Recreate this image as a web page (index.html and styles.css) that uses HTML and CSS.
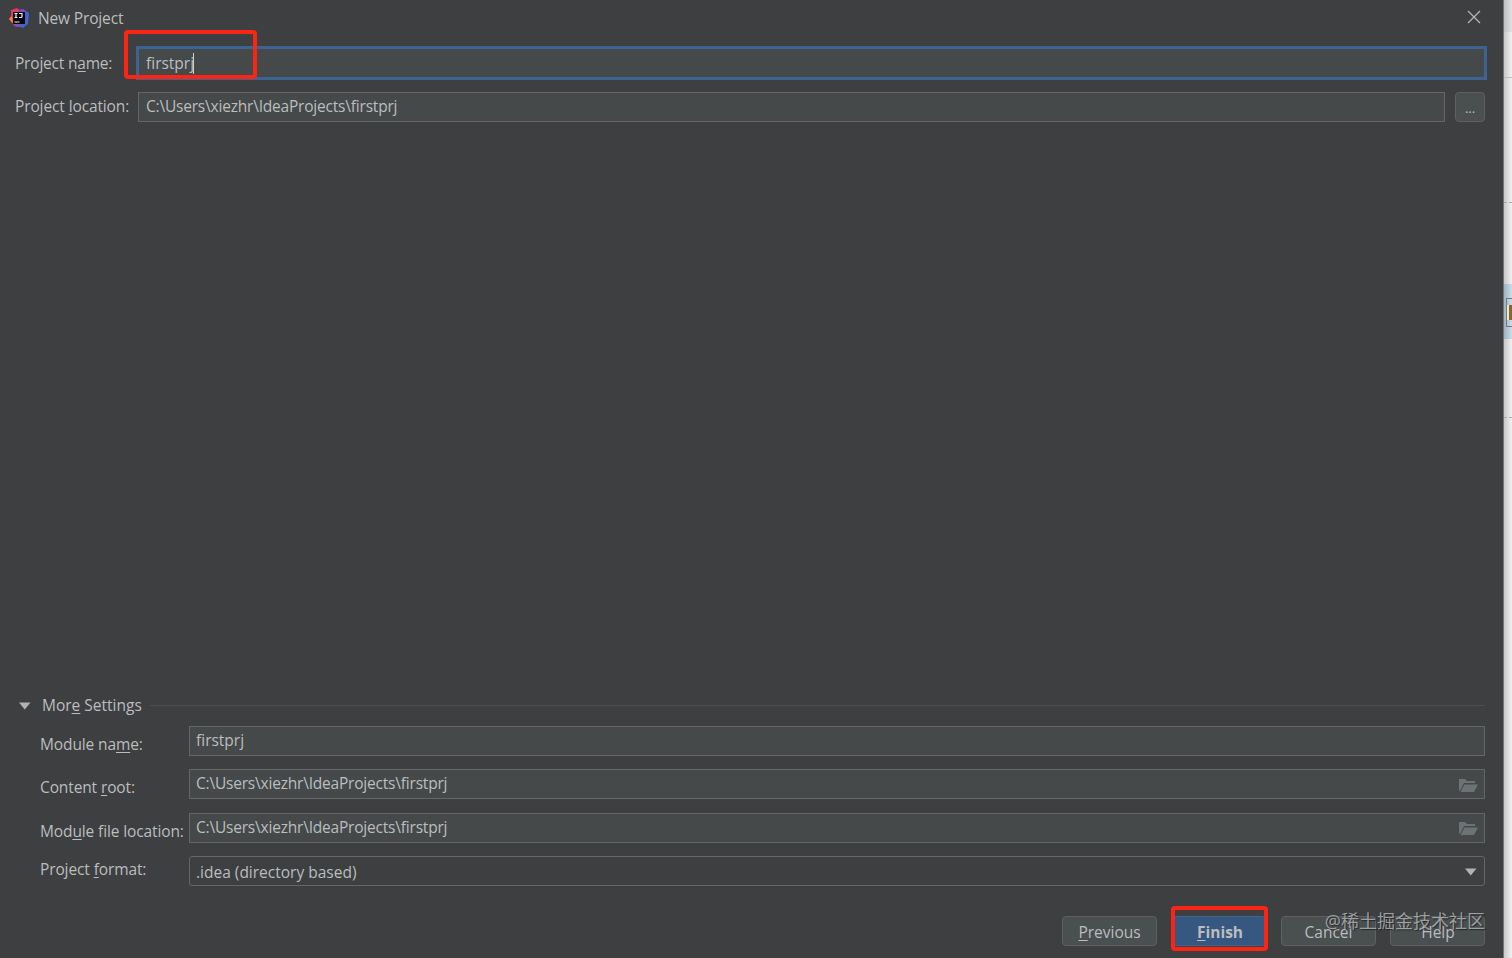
FILE: index.html
```html
<!DOCTYPE html>
<html lang="en">
<head>
    <meta charset="UTF-8" />
    <meta name="viewport" content="width=device-width, initial-scale=1.0" />
    <title>New Project</title>
    <link rel="stylesheet" href="styles.css">
</head>
<body>
    <div class="dialog">
        <div class="titlebar">
            <svg class="logo" width="20" height="20" viewBox="0 0 20 20">
                <path d="M2 2 8 0 12 3 10 18 5 17 2 14 0 11 2 8z" fill="#d93a68" />
                <path d="M10 3 14 1 20 5 19 16 14 20 6 17z" fill="#3f63d0" />
                <path d="M10 2 14 1 17 4 15 7z" fill="#8947c9" />
                <path d="M0 11 3 8 4 15z" fill="#f58a2c" />
                <path d="M4 15 9 16 13 18 9 19 5 18z" fill="#8a4ab8" />
                <rect x="4" y="4" width="12" height="12" fill="#050308" />
                <path d="M5.5 5.500h3M7 5.500v4M5.500 9.500h3M10 5.500h3v3q0 1-1 1h-2M5.500 14h5" fill="none" stroke="#eee" stroke-width="1.2" />
            </svg>
            <span class="title">New Project</span>
            <svg class="close" width="14" height="14" viewBox="0 0 14 14">
                <path d="M1 1 13 13M13 1 1 13" stroke="#b4b6b7" stroke-width="1.3" />
            </svg>
        </div>

        <div class="row name-row">
            <label>Project n<u>a</u>me:</label>
            <div class="field focused">firstprj<i class="caret"></i></div>
            <div class="mark mark-name"></div>
        </div>
        <div class="row location-row">
            <label>Project <u>l</u>ocation:</label>
            <div class="field path">C:\Users\xiezhr\IdeaProjects\firstprj</div>
            <button class="browse">...</button>
        </div>

        <div class="more">
            <svg width="12" height="8" viewBox="0 0 12 8"><path d="M0 .5h11.500L5.750 7.500z" fill="#b0b2b3" /></svg>
            <span>Mor<u>e</u> Settings</span>
            <div class="line"></div>
        </div>
        <div class="settings">
            <div class="row">
                <label>Module na<u>m</u>e:</label>
                <div class="field">firstprj</div>
            </div>
            <div class="row">
                <label>Content <u>r</u>oot:</label>
                <div class="field path">C:\Users\xiezhr\IdeaProjects\firstprj
                    <svg class="folder" width="19" height="15" viewBox="0 0 19 15"><path d="M0 12V1h6l2 2h8v2H5L1 13z M5.500 6.500H19L15 14H1.500z" fill="#6d7375" /></svg>
                </div>
            </div>
            <div class="row">
                <label>Mod<u>u</u>le file location:</label>
                <div class="field path">C:\Users\xiezhr\IdeaProjects\firstprj
                    <svg class="folder" width="19" height="15" viewBox="0 0 19 15"><path d="M0 12V1h6l2 2h8v2H5L1 13z M5.500 6.500H19L15 14H1.500z" fill="#6d7375" /></svg>
                </div>
            </div>
            <div class="row format-row">
                <label>Project <u>f</u>ormat:</label>
                <div class="field select">.idea (directory based)
                    <svg class="arrow" width="12" height="8" viewBox="0 0 12 8"><path d="M0 .5h11.500L5.750 7.500z" fill="#b0b2b3" /></svg>
                </div>
            </div>
        </div>

        <div class="buttons">
            <button><u>P</u>revious</button>
            <button class="primary"><u>F</u>inish<span class="mark mark-finish"></span></button>
            <button>Cancel</button>
            <button>Help</button>
            <div class="watermark">@稀土掘金技术社区</div>
        </div>
    </div>

    <!-- window behind the dialog -->
    <div class="behind">
        <div class="behind-top"></div>
        <div class="behind-head"></div>
        <div class="behind-row"></div>
        <div class="behind-selected"><span></span></div>
        <div class="behind-gap"></div>
    </div>
</body>
</html>
```
FILE: styles.css
```css
* {
    box-sizing: border-box;
    margin: 0;
    padding: 0;
}

body {
    display: flex;
    height: 100vh;
    overflow: hidden;
    background: #3d3f41;
    color: #bbbdbe;
    font-family: "Open Sans", "Noto Sans CJK SC", sans-serif;
    font-size: 15.5px;
    line-height: 22px;
    white-space: nowrap;
}

u {
    text-decoration: underline;
    text-decoration-thickness: 1px;
    text-underline-offset: 2px;
    text-decoration-skip-ink: none;
}

.dialog {
    width: 1504px;
    display: flex;
    flex-direction: column;
    padding: 0 18px 12px 15px;
    border-right: 1px solid #747677;
}

.titlebar {
    height: 36px;
    display: flex;
    align-items: center;
    margin-left: -6px;
}

.title {
    margin-left: 9px;
    letter-spacing: -0.15px;
}

.close {
    position: relative;
    top: -1px;
    margin-left: auto;
    margin-right: 4px;
}

.row {
    display: flex;
    align-items: center;
    position: relative;
}

label {
    letter-spacing: -0.12px;
}

.field {
    flex: 1;
    height: 30px;
    display: flex;
    align-items: center;
    padding: 0 7px 2px;
    background: #45494a;
    border: 1px solid #646667;
}

.name-row {
    margin-top: 10px;
}

.name-row label {
    width: 121px;
    letter-spacing: -0.2px;
}

.name-row .field {
    height: 34px;
    margin-right: -2px;
    padding-bottom: 0;
    border: 3px solid #3d6391;
}

.caret {
    width: 1px;
    height: 21px;
    margin-left: -1px;
    background: #d0d0d0;
}

.location-row {
    margin-top: 12px;
}

.location-row label {
    width: 123px;
    padding-bottom: 2px;
}

.path {
    letter-spacing: -0.2px;
}

.browse {
    width: 30px;
    height: 30px;
    margin-left: 10px;
    padding-top: 2px;
    font-size: 13px;
}

button {
    position: relative;
    background: #4a4f50;
    border: 1px solid #5e6162;
    border-radius: 4px;
    color: #bbbdbe;
    font: inherit;
}

.more {
    height: 22px;
    display: flex;
    align-items: center;
    margin-top: auto;
    padding-left: 4px;
}

.more span {
    margin-left: 11px;
    padding-bottom: 1px;
}

.line {
    flex: 1;
    height: 1px;
    margin-left: 8px;
    background: #4c4f50;
}

.settings {
    display: flex;
    flex-direction: column;
    gap: 13.5px;
    margin: 9px 0 30px;
    padding-left: 25px;
}

.settings label {
    width: 149px;
    padding-top: 6px;
}

.settings .field {
    padding-left: 6px;
}

.settings .format-row label {
    padding: 0 0 4px;
}

.folder,
.arrow {
    margin-left: auto;
}

.folder {
    position: relative;
    left: 1px;
    top: 2px;
}

.settings .select {
    background: #3d3f41;
    border-radius: 3px;
    padding-top: 1px;
    padding-bottom: 0;
}

.buttons {
    position: relative;
    display: flex;
    justify-content: flex-end;
    gap: 14.5px;
}

.buttons button {
    width: 95px;
    height: 30px;
    padding: 1px 0 0 1px;
}

.buttons .primary {
    padding-left: 3px;
    background: #365880;
    border-color: #3d638f;
    font-weight: bold;
}

/* red highlight boxes */
.mark {
    position: absolute;
    border: 4px solid #fb2515;
    border-radius: 4px;
}

.mark-name {
    left: 109px;
    top: -16px;
    width: 133px;
    height: 49px;
}

.mark-finish {
    left: -1px;
    top: -11px;
    width: 97px;
    height: 45px;
}

.watermark {
    position: absolute;
    right: 0;
    top: -8px;
    font-size: 18px;
    line-height: 26px;
    color: rgba(190, 192, 194, 0.75);
    text-shadow: 1px 1px 1px rgba(0, 0, 0, 0.5);
}

.behind {
    width: 8px;
    display: flex;
    flex-direction: column;
    background: linear-gradient(to right, #c8c8c8, #f2f2f2);
}

.behind-top {
    height: 32px;
    background: linear-gradient(to right, #c0c0c0, #dfe0e2);
}

.behind-head {
    height: 46px;
    border-bottom: 1px solid #bdbdbd;
}

.behind-row {
    height: 125px;
    border-bottom: 1px dashed #aaa;
}

.behind-selected {
    height: 55px;
    margin-top: 81px;
    padding: 14px 0 0 2px;
    background: linear-gradient(to right, #9fb3bf, #c8dfeb);
}

.behind-selected span {
    display: block;
    height: 29px;
    padding: 6px 0;
    border: 1px solid #777;
    border-right: 0;
    background: #eee8ce linear-gradient(to right, #eee8ce 2px, #80682f 2px) content-box;
}

.behind-gap {
    height: 79px;
    border-bottom: 1px dashed #aaa;
}
```
